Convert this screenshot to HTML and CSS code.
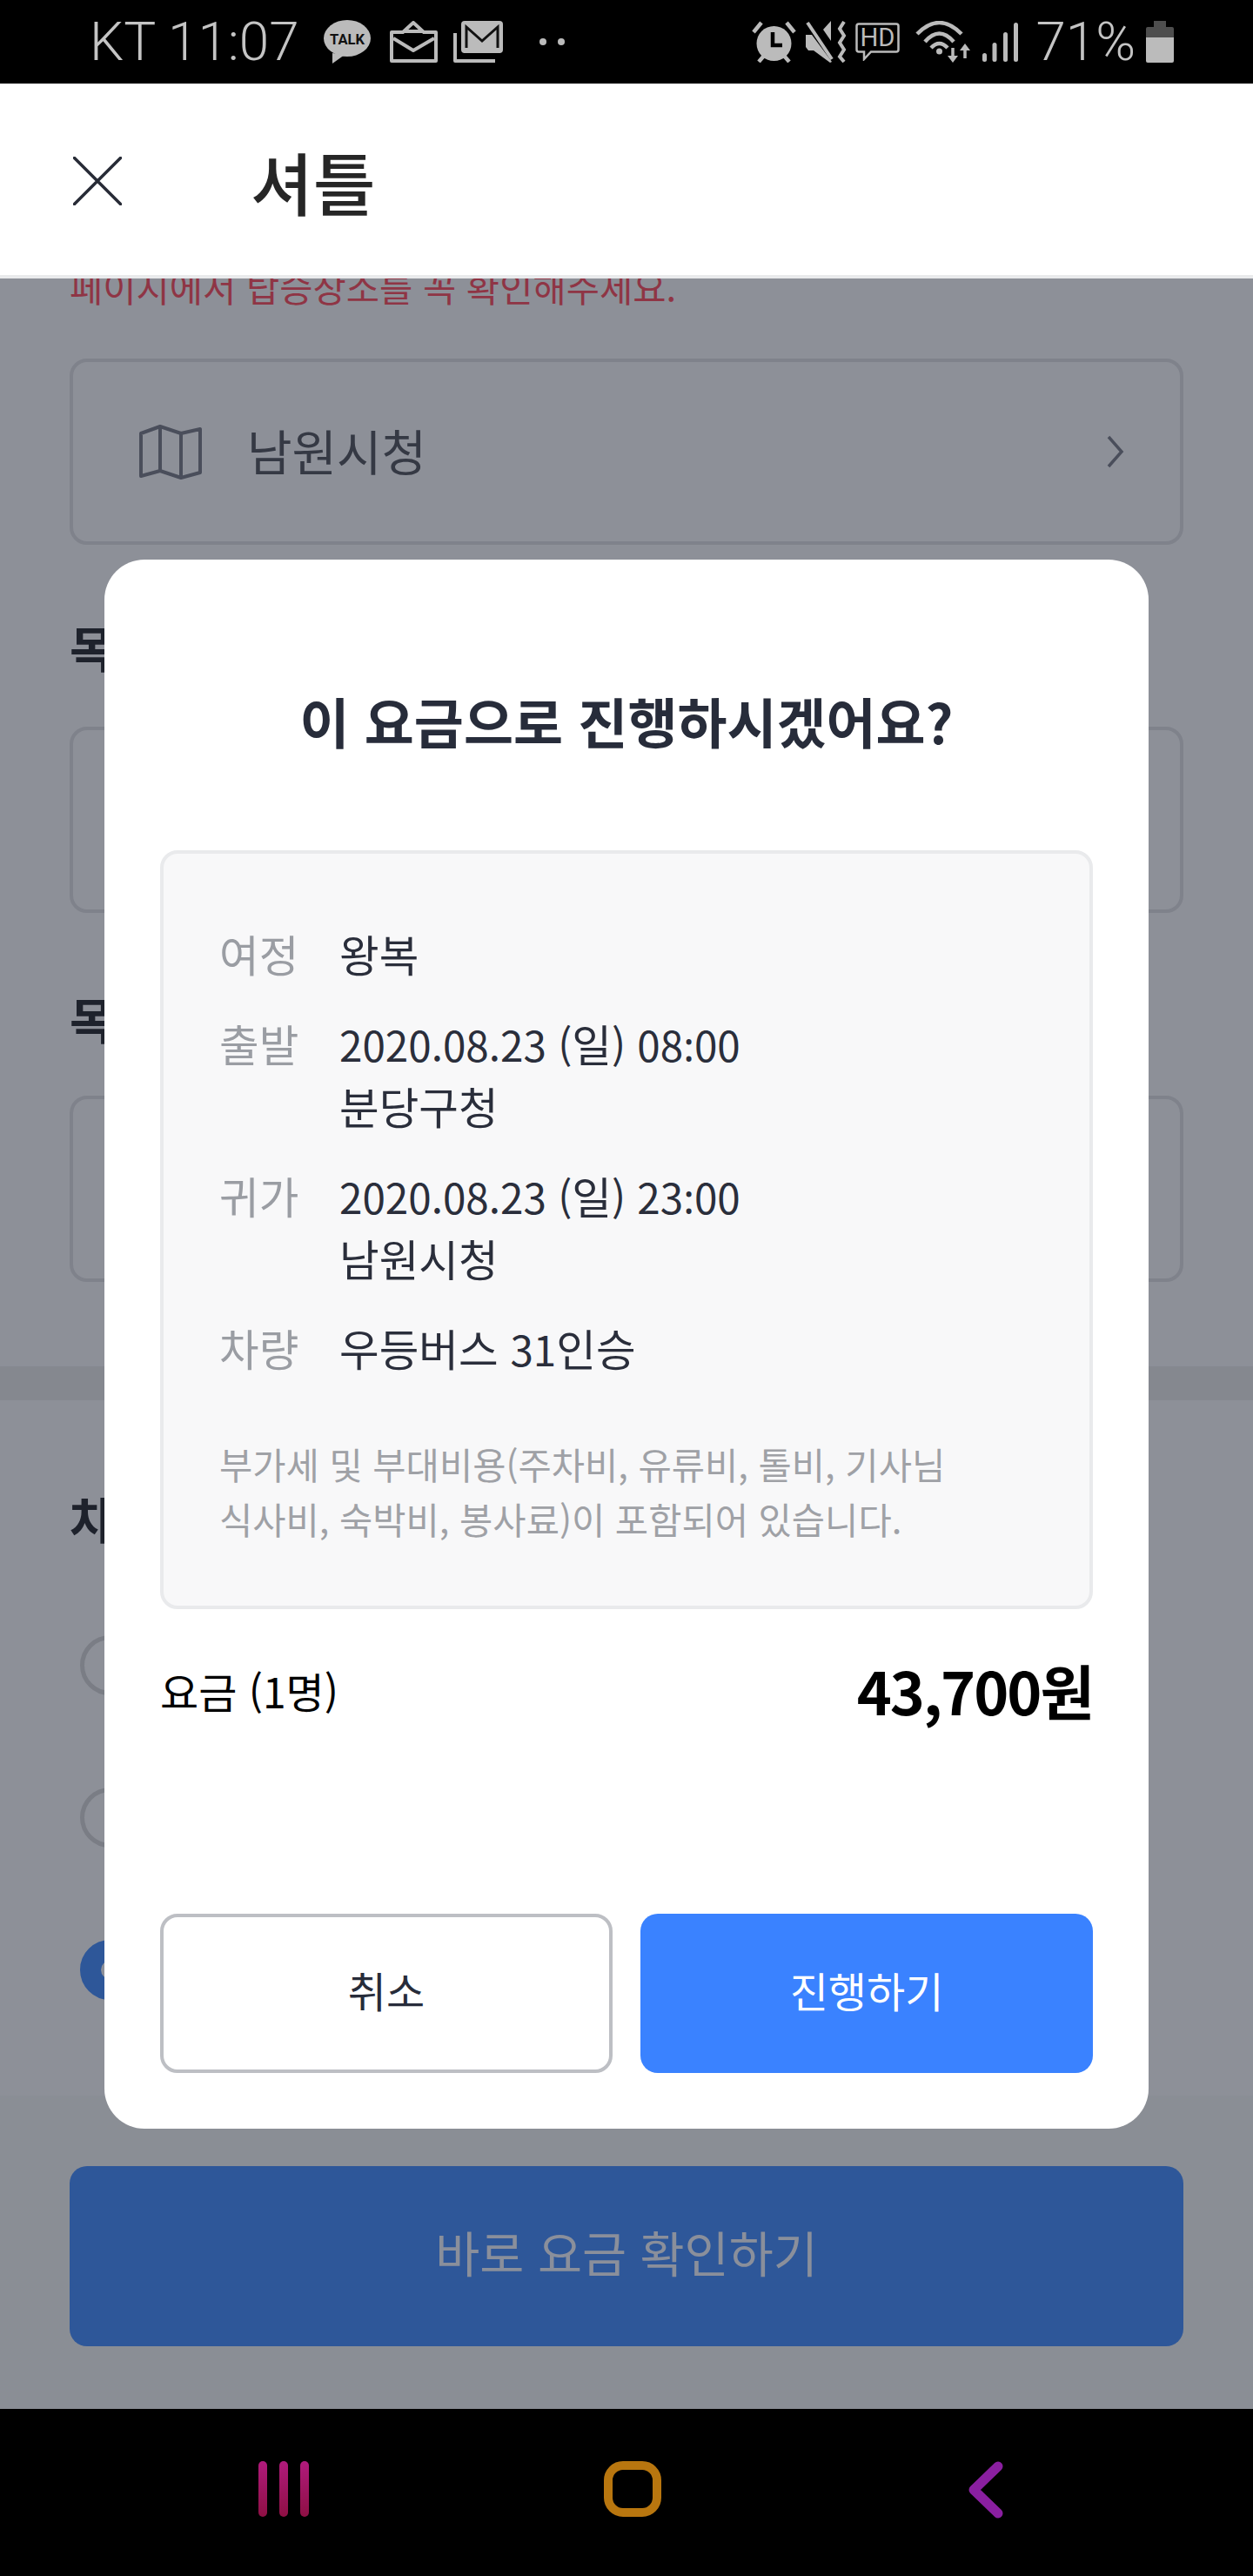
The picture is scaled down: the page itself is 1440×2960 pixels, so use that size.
FILE: index.html
```html
<!DOCTYPE html>
<html lang="ko">
<head>
<meta charset="utf-8">
<title>셔틀</title>
<link rel="stylesheet" href="styles.css">
</head>
<body>
<div class="screen">
  <div class="statusbar">
    <span class="status-text">KT 11:07</span>
    <svg class="ic-talk" width="54" height="50" viewBox="0 0 54 50"><ellipse cx="27" cy="21" rx="27" ry="21" fill="#bbb"/><path d="M10 38L10 50L24 40Z" fill="#bbb"/><text x="7" y="28" class="talk-label" textLength="40" lengthAdjust="spacingAndGlyphs">TALK</text></svg>
    <svg class="ic-mail" width="55" height="48" viewBox="0 0 55 48" fill="none" stroke="#bbb" stroke-width="4" stroke-linejoin="round"><path d="M2 46V13H15L27 2L39 13H53V46Z"/><path d="M17 12H38"/><path d="M4 20L27 34L51 20"/></svg>
    <svg class="ic-gmail" width="57" height="48" viewBox="0 0 57 48" fill="none"><path d="M2 14V46H48" stroke="#bbb" stroke-width="4" stroke-linejoin="round"/><rect x="9" y="0" width="48" height="37" rx="4" fill="#bbb"/><path d="M15 31V7L33 23L51 7V31" stroke="#111" stroke-width="3"/><path d="M12 35H54" stroke="#bbb" stroke-width="4"/></svg>
    <span class="dots"><i></i><i></i></span>
    <span class="status-right">
      <svg class="ic-alarm" width="51" height="48" viewBox="0 0 51 48" fill="none"><circle cx="25.500" cy="26" r="20" fill="#bbb"/><path d="M24 13V28H35" stroke="#000" stroke-width="4.500"/><path d="M2 13L11 2M49 13L40 2M8 47L14 40M43 47L37 40" stroke="#bbb" stroke-width="4.500"/></svg>
      <svg class="ic-mute" width="47" height="48" viewBox="0 0 47 48" fill="none"><path d="M0 16H7L30 47L28 48L9 34H3L0 30ZM20 10L29 0V23Z" fill="#bbb"/><path d="M2 2L30 44" stroke="#bbb" stroke-width="4"/><path d="M44 1L39 9L44 17L39 25L44 33L39 41L44 47" stroke="#bbb" stroke-width="4"/></svg>
      <svg class="ic-hd" width="51" height="44" viewBox="0 0 51 44" fill="none"><path d="M4 1.500H47Q49.500 1.500 49.500 4V31Q49.500 33.500 47 33.500H18L10 42V33.500H4Q1.500 33.500 1.500 31V4Q1.500 1.500 4 1.500Z" stroke="#bbb" stroke-width="2.500"/><text x="5.500" y="27" class="hd-label" textLength="40" lengthAdjust="spacingAndGlyphs">HD</text></svg>
      <svg class="ic-wifi" width="64" height="48" viewBox="0 0 64 48" fill="none"><path d="M2 15Q27.500 -11 53 15M11 24Q27.500 5 44 24M18 31Q27.500 21 37 31" stroke="#bbb" stroke-width="4.500"/><circle cx="27.500" cy="35" r="3.500" fill="#bbb"/><path d="M43 31V42M57 33V43" stroke="#bbb" stroke-width="3.500"/><path d="M37 40H49L43 48ZM51 34H63L57 26Z" fill="#bbb"/></svg>
      <svg class="ic-signal" width="41" height="45" viewBox="0 0 41 45" fill="#bbb"><rect x="0" y="35" width="5" height="10" rx="2.500"/><rect x="11.500" y="23" width="5" height="22" rx="2.500"/><rect x="24" y="11" width="5" height="34" rx="2.500"/><rect x="36" y="0" width="5" height="45" rx="2.500"/></svg>
      <span class="status-text battery-text">71%</span>
      <svg class="ic-battery" width="32" height="48" viewBox="0 0 32 48"><path d="M9 0H23V7H30Q32 7 32 9V19H0V9Q0 7 2 7H9Z" fill="#4e4e4e"/><path d="M0 19H32V46Q32 48 30 48H2Q0 48 0 46Z" fill="#bbb"/></svg>
    </span>
  </div>

  <header class="topbar">
    <svg class="close-icon" width="56" height="56" viewBox="0 0 56 56" fill="none"><path d="M1.500 1.500L54.500 54.500M54.500 1.500L1.500 54.500" stroke="#272b36" stroke-width="3.500" stroke-linecap="round"/></svg>
    <h1 class="topbar-title">셔틀</h1>
  </header>

  <main class="page">
    <div class="page-body">
      <p class="hint">페이지에서 탑승장소를 꼭 확인해주세요.</p>
      <div class="field field-first">
        <svg class="map-icon" width="72" height="64" viewBox="0 0 72 64" fill="none"><path d="M2 11L24 3L48 11L70 6V56L48 62L24 54L2 60Z" stroke="#4a4e5b" stroke-width="4" stroke-linejoin="round"/><path d="M24 3V54M48 11V62" stroke="#4a4e5b" stroke-width="4"/></svg>
        <span class="field-text">남원시청</span>
        <svg class="chevron" width="20" height="38" viewBox="0 0 20 38" fill="none"><path d="M2 2L17 19L2 36" stroke="#4a4e5b" stroke-width="3.500"/></svg>
      </div>
      <h2 class="section-label label-a">목</h2>
      <div class="field field-empty"></div>
      <h2 class="section-label label-b">목</h2>
      <div class="field field-empty"></div>
    </div>
    <div class="band"></div>
    <div class="options">
      <h2 class="section-label label-c">차</h2>
      <span class="radio"></span>
      <span class="radio"></span>
      <span class="radio radio-on"></span>
    </div>
    <div class="footer">
      <div class="footer-button">바로 요금 확인하기</div>
    </div>
  </main>

  <nav class="navbar">
    <svg class="nav-recent" width="60" height="64" viewBox="0 0 60 64"><defs><linearGradient id="gr" x1="0" y1="0" x2="0" y2="1"><stop offset="0" stop-color="#b01a7c"/><stop offset="1" stop-color="#8e1044"/></linearGradient></defs><rect x="1" y="0" width="10" height="64" rx="5" fill="url(#gr)"/><rect x="25" y="0" width="10" height="64" rx="5" fill="url(#gr)"/><rect x="49" y="0" width="10" height="64" rx="5" fill="url(#gr)"/></svg>
    <svg class="nav-home" width="66" height="64" viewBox="0 0 66 64" fill="none"><rect x="5" y="5" width="56" height="54" rx="17" stroke="#b8760f" stroke-width="10"/></svg>
    <svg class="nav-back" width="40" height="66" viewBox="0 0 40 66" fill="none"><path d="M34 6L6 33L34 60" stroke="#8a1fa0" stroke-width="11" stroke-linecap="round" stroke-linejoin="round"/></svg>
  </nav>

  <section class="modal">
    <h2 class="modal-title">이 요금으로 진행하시겠어요?</h2>
    <div class="summary">
      <dl class="rows">
        <dt>여정</dt><dd>왕복</dd>
        <dt>출발</dt><dd><span class="num">2020.08.23 (</span>일<span class="num">) 08<span class="colon">:</span>00</span><br>분당구청</dd>
        <dt>귀가</dt><dd><span class="num">2020.08.23 (</span>일<span class="num">) 23<span class="colon">:</span>00</span><br>남원시청</dd>
        <dt>차량</dt><dd>우등버스 <span class="num">31</span>인승</dd>
      </dl>
      <p class="note">부가세 및 부대비용(주차비, 유류비, 톨비, 기사님<br>식사비, 숙박비, 봉사료)이 포함되어 있습니다.</p>
    </div>
    <div class="fare">
      <span class="fare-label">요금 (1명)</span>
      <strong class="fare-price">43,700원</strong>
    </div>
    <div class="actions">
      <button class="btn btn-cancel">취소</button>
      <button class="btn btn-go">진행하기</button>
    </div>
  </section>
</div>
</body>
</html>
```
FILE: styles.css
```css
* { box-sizing: border-box; }
html, body { margin: 0; padding: 0; background: #000; }
body {
  font-family: "Noto Sans CJK KR", "Noto Sans", sans-serif;
  font-variant-ligatures: no-contextual;
}
h1, h2, p, dl, dd { margin: 0; }

.screen {
  position: relative;
  width: 1440px;
  height: 2960px;
  display: flex;
  flex-direction: column;
  overflow: hidden;
}

/* status bar */
.statusbar {
  height: 96px;
  flex: none;
  background: #000;
  display: flex;
  align-items: center;
  padding: 0 91px 0 103px;
}
.statusbar svg { display: block; flex: none; }
.status-text {
  font-family: Roboto, sans-serif;
  font-weight: 300;
  font-size: 62px;
  line-height: 96px;
  color: #c4c4c4;
  white-space: nowrap;
}
.talk-label { font-family: Roboto, sans-serif; font-weight: 700; font-size: 17px; fill: #111; }
.hd-label { font-family: Roboto, sans-serif; font-weight: 400; font-size: 30px; fill: #bbb; }
.ic-talk { margin-left: 28px; }
.ic-mail { margin-left: 22px; }
.ic-gmail { margin-left: 18px; }
.dots { margin-left: 42px; display: flex; gap: 13px; }
.dots i { width: 8px; height: 8px; border-radius: 50%; background: #bbb; }
.status-right { margin-left: auto; display: flex; align-items: center; }
.ic-mute { margin-left: 11px; }
.ic-hd { margin-left: 10px; }
.ic-wifi { margin-left: 18px; }
.ic-signal { margin-left: 13px; }
.battery-text { margin-left: 20px; }
.ic-battery { margin-left: 12px; }

/* top bar */
.topbar {
  height: 224px;
  flex: none;
  position: relative;
  z-index: 1;
  background: #fff;
  border-bottom: 4px solid #e9eaec;
  display: flex;
  align-items: center;
  padding: 4px 0 0 84px;
}
.close-icon { display: block; flex: none; }
.topbar-title {
  margin-left: 148px;
  font-size: 78px;
  line-height: 100px;
  font-weight: 500;
  color: #262626;
}

/* dimmed page */
.page {
  flex: 1;
  min-height: 0;
  background: #8d9098;
  overflow: hidden;
  display: flex;
  flex-direction: column;
}
.page-body { padding: 0 80px; margin-top: -20px; height: 1270px; flex: none; }
.hint {
  font-size: 41.6px;
  line-height: 58px;
  color: #8f3545;
  white-space: nowrap;
}
.field {
  border: 4px solid #7f828b;
  border-radius: 20px;
  height: 214px;
}
.field-first {
  margin-top: 54px;
  display: flex;
  align-items: center;
  padding: 0 64px 0 76px;
}
.field-empty { height: 214px; }
.map-icon { display: block; flex: none; }
.field-text {
  margin-left: 52px;
  padding-bottom: 4px;
  font-size: 56px;
  line-height: 72px;
  color: #353944;
}
.chevron { margin-left: auto; display: block; flex: none; }
.section-label {
  font-size: 56px;
  font-weight: 700;
  line-height: 72px;
  color: #1e222c;
}
.label-a { margin-top: 81px; margin-bottom: 56px; }
.label-b { margin-top: 85px; margin-bottom: 53px; }
.band { height: 39px; flex: none; background: #85888f; }

.options {
  height: 799px;
  flex: none;
  padding: 99px 0 0 92px;
  display: flex;
  flex-direction: column;
  align-items: flex-start;
}
.options .section-label { margin-left: -12px; margin-bottom: 99px; }
.radio {
  display: block;
  width: 69px;
  height: 69px;
  border-radius: 50%;
  border: 5px solid #7a7d85;
  margin-bottom: 106px;
}
.radio-on { border: 24px solid #2e5799; background: #8d9098; }
.footer {
  flex: 1;
  background: #8a8e95;
  padding: 81px 80px 0;
}
.footer-button {
  height: 207px;
  border-radius: 20px;
  background: #2e5799;
  color: #8a8f9b;
  font-size: 55.5px;
  line-height: 196px;
  text-align: center;
}

/* nav bar */
.navbar {
  height: 192px;
  flex: none;
  background: #000;
  display: flex;
  align-items: flex-start;
  padding: 60px 0 0 296px;
  position: relative;
}
.navbar svg { display: block; flex: none; }
.nav-home { margin-left: 338px; }
.nav-back { margin-left: 353px; }

/* modal */
.modal {
  position: absolute;
  z-index: 2;
  left: 120px;
  top: 643px;
  width: 1200px;
  height: 1803px;
  background: #fff;
  border-radius: 46px;
  padding: 64px;
  display: flex;
  flex-direction: column;
}
.modal-title {
  padding: 81px 0 109px;
  font-size: 62px;
  line-height: 80px;
  font-weight: 700;
  color: #272c3a;
  text-align: center;
}
.summary {
  width: 1072px;
  background: #f8f8f9;
  border: 4px solid #e9eaec;
  border-radius: 20px;
  padding: 78px 64px 68px;
}
.rows {
  display: grid;
  grid-template-columns: 138px 1fr;
  row-gap: 31px;
  font-size: 49.6px;
  line-height: 72px;
}
.rows .num { font-size: 47.6px; line-height: 1; }
.rows .colon { font-family: "Noto Sans", sans-serif; }
.rows dt { color: #9a9da3; }
.rows dd { color: #2a2e3b; white-space: nowrap; }
.note {
  margin-top: 67px;
  font-size: 41.6px;
  line-height: 63px;
  color: #9fa1a6;
  white-space: nowrap;
}
.fare {
  margin-top: 43px;
  height: 100px;
  display: flex;
  justify-content: space-between;
  align-items: center;
}
.fare-label { font-size: 48px; line-height: 100px; color: #000; }
.fare-price { font-size: 68px; letter-spacing: -2px; line-height: 100px; font-weight: 700; color: #000; }
.actions {
  margin-top: auto;
  display: flex;
  gap: 32px;
}
.btn {
  width: 520px;
  height: 183px;
  border-radius: 20px;
  font-family: inherit;
  font-size: 48px;
  padding: 0 0 10px;
}
.btn-cancel { background: #fff; border: 4px solid #bdbfc4; color: #272c3a; }
.btn-go { background: #3a82ff; border: 0; color: #fff; }
```
